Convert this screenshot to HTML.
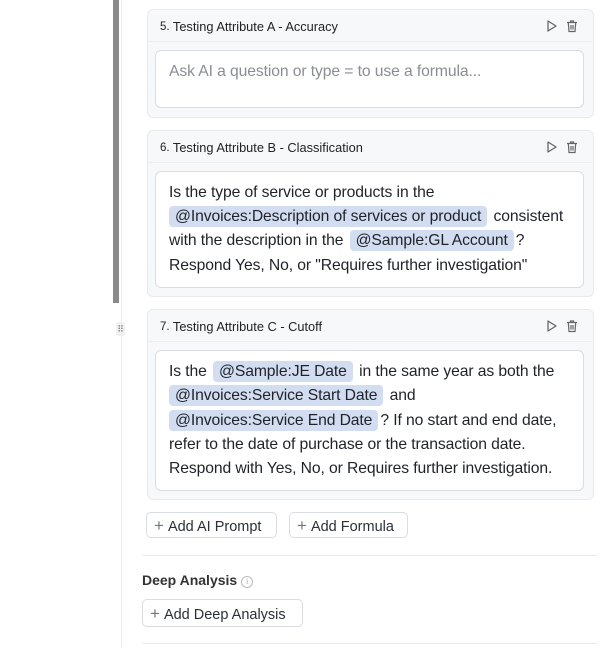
<!DOCTYPE html>
<html><head><meta charset="utf-8"><style>
body{margin:0;width:614px;height:648px;background:#fff;font-family:"Liberation Sans",sans-serif;color:#1f2328;position:relative;overflow:hidden}
.a{position:absolute}
.sb{left:113px;top:0;width:6px;height:303px;background:#8a8a8a}
.vl{left:121px;top:0;width:1px;height:648px;background:#ececec}
.card{position:absolute;left:147px;width:445px;background:#f7f8fa;border:1px solid #e8eaee;border-radius:6px}
.hd{position:absolute;left:12px;top:9px;font-size:12.8px;color:#222}
.hd b{font-weight:normal;font-size:11.5px;position:relative;top:-1px}
.ic{position:absolute;right:12px;top:9px}
.box{position:absolute;left:7px;width:427px;background:#fff;border:1px solid #d9dce1;border-radius:6px}
.ln{position:absolute;left:13px;font-size:15.7px;white-space:nowrap;line-height:21px;letter-spacing:-0.1px}
.c{background:#d2ddf1;border-radius:4px;padding:0 6px;display:inline-block;line-height:21px;margin:0 2px}
.hr{position:absolute;top:31px;left:0;right:0;height:1px;background:#eceef1}
.btn{position:absolute;height:26px;border:1px solid #d9dce1;border-radius:5px;background:#fff;font-size:14.5px;line-height:26px;color:#2b2f36;padding:0 9px 0 7px;box-sizing:border-box}
.btn span{color:#777;font-size:17px;margin-right:4px}
</style></head><body>
<div class="a sb"></div><div class="a vl"></div>
<div class="card" style="top:9px;height:107px">
<div class="hd"><b>5.</b> Testing Attribute A - Accuracy</div>
<svg class="ic" width="36" height="14" viewBox="0 0 36 14"><path d="M3 2 L11 7 L3 12 Z" fill="none" stroke="#666" stroke-width="1.3" stroke-linejoin="round"/><path d="M22 3.5h10M25.5 3.5V2h3v1.5M23.3 3.5l.7 9h6l.7-9M26 6v4.5M28 6v4.5" fill="none" stroke="#666" stroke-width="1.2"/></svg>
<div class="hr"></div>
<div class="box" style="top:40px;height:56px"><div class="ln" style="top:10px;color:#8a8d93">Ask AI a question or type = to use a formula...</div></div>
</div>
<div class="card" style="top:130px;height:165px">
<div class="hd"><b>6.</b> Testing Attribute B - Classification</div>
<svg class="ic" width="36" height="14" viewBox="0 0 36 14"><path d="M3 2 L11 7 L3 12 Z" fill="none" stroke="#666" stroke-width="1.3" stroke-linejoin="round"/><path d="M22 3.5h10M25.5 3.5V2h3v1.5M23.3 3.5l.7 9h6l.7-9M26 6v4.5M28 6v4.5" fill="none" stroke="#666" stroke-width="1.2"/></svg>
<div class="hr"></div>
<div class="box" style="top:40px;height:115px">
<div class="ln" style="top:10px">Is the type of service or products in the</div>
<div class="ln" style="top:34px;left:11px"><span class="c">@Invoices:Description of services or product</span> consistent</div>
<div class="ln" style="top:58px">with the description in the <span class="c">@Sample:GL Account</span>?</div>
<div class="ln" style="top:83px">Respond Yes, No, or "Requires further investigation"</div>
</div></div>
<div class="a" style="left:116px;top:322px;width:9px;height:14px;background:#f0f0f0;border-radius:3px;font-size:9px;color:#777;text-align:center;line-height:14px">⠿</div>
<div class="card" style="top:309px;height:189px">
<div class="hd"><b>7.</b> Testing Attribute C - Cutoff</div>
<svg class="ic" width="36" height="14" viewBox="0 0 36 14"><path d="M3 2 L11 7 L3 12 Z" fill="none" stroke="#666" stroke-width="1.3" stroke-linejoin="round"/><path d="M22 3.5h10M25.5 3.5V2h3v1.5M23.3 3.5l.7 9h6l.7-9M26 6v4.5M28 6v4.5" fill="none" stroke="#666" stroke-width="1.2"/></svg>
<div class="hr"></div>
<div class="box" style="top:40px;height:139px">
<div class="ln" style="top:10px">Is the <span class="c">@Sample:JE Date</span> in the same year as both the</div>
<div class="ln" style="top:34px;left:11px"><span class="c">@Invoices:Service Start Date</span> and</div>
<div class="ln" style="top:59px;left:11px"><span class="c">@Invoices:Service End Date</span>? If no start and end date,</div>
<div class="ln" style="top:83px">refer to the date of purchase or the transaction date.</div>
<div class="ln" style="top:107px">Respond with Yes, No, or Requires further investigation.</div>
</div></div>
<div class="btn" style="left:146px;top:512px;width:131px"><span>+</span>Add AI Prompt</div>
<div class="btn" style="left:289px;top:512px;width:119px"><span>+</span>Add Formula</div>
<div class="a" style="left:142px;top:555px;width:455px;height:1px;background:#e6e8eb"></div>
<div class="a" style="left:142px;top:572px;font-size:14px;font-weight:bold;color:#333">Deep Analysis <span style="font-weight:normal;color:#aaa;font-size:11px;border:1px solid #bbb;border-radius:50%;display:inline-block;width:10px;height:10px;line-height:10px;text-align:center;font-size:8px;vertical-align:1px">i</span></div>
<div class="btn" style="left:142px;top:599px;width:161px;height:28px;line-height:28px"><span>+</span>Add Deep Analysis</div>
<div class="a" style="left:142px;top:643px;width:455px;height:1px;background:#e6e8eb"></div>
</body></html>
